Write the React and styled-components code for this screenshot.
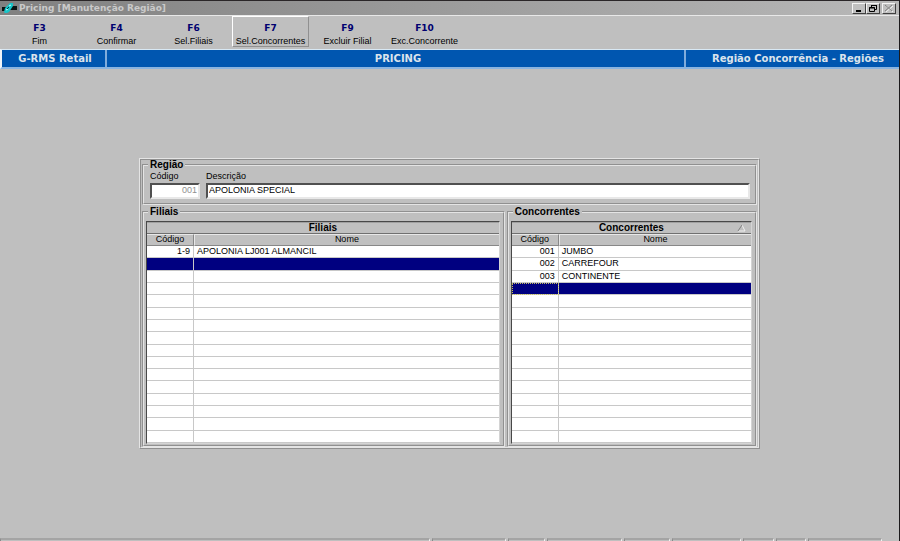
import styled, { createGlobalStyle } from "styled-components";

const GlobalStyle = createGlobalStyle`
    *, *::before, *::after {
        box-sizing: border-box;
    }

    body {
        margin: 0;
        background-color: #bfbfbf;
        color: #000;
        font-family: "Liberation Sans", Arial, sans-serif;
        font-size: 9px;
        line-height: 12px;
    }

    button, input {
        font: inherit;
        color: inherit;
    }
`;

const Window = styled.div`
    display: flex;
    flex-direction: column;
    min-height: 100vh;
    border-top: 1px solid #2a2628;
    border-right: 1px solid #1c1a1c;
`;

const TitleBar = styled.header`
    display: flex;
    align-items: center;
    gap: 2px;
    height: 14px;
    padding: 0 3px 0 2px;
    background: linear-gradient(to right, #808080, #b8b8b8);
`;

const Title = styled.h1`
    flex: 1;
    margin: 0;
    color: #cacaca;
    font-family: "DejaVu Sans", Verdana, sans-serif;
    font-size: 9px;
    font-weight: bold;
    line-height: 10px;
`;

const WindowButtons = styled.div`
    display: flex;
`;

const WindowButton = styled.button`
    display: flex;
    width: 14px;
    height: 11px;
    margin-left: ${({ $apart }) => ($apart ? "2px" : "0")};
    padding: 0;
    border: 1px solid;
    border-color: #f4f4f4 #404040 #404040 #f4f4f4;
    background-color: #c0c0c0;
`;

const Toolbar = styled.nav`
    display: flex;
    height: 34px;
    padding-left: 1px;
    border-top: 1px solid #e8e8e8;
`;

const ToolButton = styled.button`
    flex: 0 0 77px;
    height: 31px;
    padding: 5px 0 0;
    border: 1px solid;
    border-color: ${({ $active }) => ($active ? "#fff #909090 #909090 #fff" : "transparent")};
    background: none;
    color: #000;
    line-height: 13px;
    white-space: nowrap;

    strong {
        display: block;
        color: #000070;
        font-family: "DejaVu Sans", Verdana, sans-serif;
        font-size: 9px;
    }
`;

const Banner = styled.div`
    display: grid;
    grid-template-columns: 103px 1fr 213px;
    gap: 2px;
    border-top: 1px solid #d8e8f4;
    border-bottom: 2px solid #8ab4e0;
    border-left: 2px solid #f0f4f8;
    background-color: #80acdc;
    color: #dce4ec;
    font-family: "DejaVu Sans", Verdana, sans-serif;
    font-size: 10px;
    font-weight: bold;
    line-height: 17px;
    text-align: center;

    span {
        background-color: #0056b0;
    }

    span:first-child {
        padding-left: 3px;
    }

    span:nth-child(2) {
        padding-left: 5px;
    }

    span:last-child {
        padding-right: 15px;
        text-align: right;
    }
`;

const Panel = styled.main`
    display: grid;
    gap: 2px;
    margin: 89px 139px 0;
    padding: 0 1px;
    border: 2px ridge #e4e4e4;
`;

const Lists = styled.div`
    display: grid;
    grid-template-columns: 29fr 20fr;
    gap: 2px;
`;

const Group = styled.fieldset`
    min-width: 0;
    margin: 0;
    padding: ${({ $form }) => ($form ? "1px 5px 4px 6px" : "4px 3px 1px 2px")};
    border: 2px groove #e4e4e4;
`;

const Legend = styled.legend`
    margin-left: ${({ $form }) => ($form ? "-2px" : "2px")};
    padding: 0 2px;
    font-size: 10px;
    font-weight: bold;
    line-height: 10px;
`;

const Fields = styled.div`
    display: grid;
    grid-template-columns: 50px 1fr;
    gap: 6px;
`;

const Field = styled.label`
    display: grid;
    grid-template-rows: 12px 16px;
    line-height: 11px;
`;

const TextBox = styled.input`
    width: 100%;
    min-width: 0;
    padding: 0 1px 1px;
    border: 2px solid;
    border-color: #505050 #e8e8e8 #e8e8e8 #505050;
    border-radius: 0;
    background-color: #fff;
    outline: none;

    &:disabled {
        color: #909090;
        text-align: right;
    }
`;

const TableFrame = styled.div`
    border: 1px solid;
    border-color: #484848 #d4d4d4 #d4d4d4 #484848;
    background-color: #fff;
`;

const Table = styled.table`
    width: 100%;
    height: 221px;
    border-spacing: 0;
    table-layout: fixed;

    th, td {
        height: 12px;
        padding: 0 3px;
        border-bottom: 1px solid #c8c8c8;
        line-height: 11px;
        white-space: nowrap;
    }

    td:first-child {
        border-right: 1px solid #c8c8c8;
        text-align: right;
    }
`;

const CodeCol = styled.col`
    width: 47px;
`;

const Caption = styled.th`
    && {
        position: relative;
        border-top: 1px solid #a0a0a0;
        border-bottom-color: #707070;
        background-color: #c0c0c0;
        font-size: 10px;
        line-height: 9px;
        vertical-align: top;
    }

    svg {
        position: absolute;
        top: 1px;
        right: 5px;
    }
`;

const HeadCell = styled.th`
    && {
        border-top: 1px solid #e8e8e8;
        border-bottom-color: #888;
        background-color: #c0c0c0;
        font-weight: normal;
        line-height: 9px;
        vertical-align: top;
    }

    &:first-child {
        border-right: 1px solid #888;
    }

    &:last-child {
        border-left: 1px solid #e8e8e8;
    }
`;

const Row = styled.tr`
    background-color: ${({ $selected }) => ($selected ? "#000080" : "#fff")};
    color: ${({ $selected }) => ($selected ? "#fff" : "#000")};

    td:first-child {
        outline: ${({ $focused }) => ($focused ? "1px dotted #c8c060" : "none")};
        outline-offset: -1px;
    }
`;

const StatusBar = styled.footer`
    display: grid;
    grid-template-columns: 430fr 74fr 37fr 75fr 46fr 69fr 31fr 30fr 74fr;
    gap: 2px;
    height: 3px;
    margin-top: auto;
    padding-right: 17px;
`;

const StatusCell = styled.span`
    border: 1px solid;
    border-width: 2px 1px 0;
    border-color: #a4a4a4 #f4f4f4 #a4a4a4 #888;
`;

const actions = [
    { key: "F3", label: "Fim" },
    { key: "F4", label: "Confirmar" },
    { key: "F6", label: "Sel.Filiais" },
    { key: "F7", label: "Sel.Concorrentes", active: true },
    { key: "F9", label: "Excluir Filial" },
    { key: "F10", label: "Exc.Concorrente" },
];

const branches = [{ code: "1-9", name: "APOLONIA LJ001 ALMANCIL" }];

const competitors = [
    { code: "001", name: "JUMBO" },
    { code: "002", name: "CARREFOUR" },
    { code: "003", name: "CONTINENTE" },
];

const ROW_COUNT = 16;
const STATUS_COUNT = 9;

const AppIcon = () => (
    <svg width="15" height="12" viewBox="0 0 15 12" aria-hidden="true">
        <path d="M0 5h5v4H0zM8 4h7v4H8z" fill="#0c1414" />
        <path d="M2 10l1-4 3-3 2-2h3v3L9 7l-2 3-2 1H3z" fill="#18c4c8" />
        <path d="M7 4l2-1M4 8l2-1" stroke="#b8ffff" />
        <path d="M5 7l2-2" stroke="#083840" />
    </svg>
);

const SortIcon = () => (
    <svg width="9" height="8" viewBox="0 0 9 8" aria-hidden="true">
        <path d="M5 1l3 6H1" stroke="#f0f0f0" fill="none" />
        <path d="M5 1L1 7" stroke="#808080" fill="none" />
    </svg>
);

const DataTable = ({ title, rows, sorted, focused }) => (
    <TableFrame>
        <Table>
            <colgroup>
                <CodeCol />
                <col />
            </colgroup>
            <thead>
                <tr>
                    <Caption colSpan={2}>
                        {title}
                        {sorted && <SortIcon />}
                    </Caption>
                </tr>
                <tr>
                    <HeadCell>Código</HeadCell>
                    <HeadCell>Nome</HeadCell>
                </tr>
            </thead>
            <tbody>
                {Array.from({ length: ROW_COUNT }, (_, i) => (
                    <Row key={i} $selected={i === rows.length} $focused={focused && i === rows.length}>
                        <td>{rows[i]?.code}</td>
                        <td>{rows[i]?.name}</td>
                    </Row>
                ))}
            </tbody>
        </Table>
    </TableFrame>
);

export default function App() {
    return (
        <>
            <GlobalStyle />
            <Window>
                <TitleBar>
                    <AppIcon />
                    <Title>Pricing [Manutenção Região]</Title>
                    <WindowButtons>
                        <WindowButton aria-label="Minimizar">
                            <svg width="12" height="9" viewBox="0 0 12 9">
                                <path d="M3 6h5v2H3z" fill="#000" />
                            </svg>
                        </WindowButton>
                        <WindowButton aria-label="Restaurar">
                            <svg width="12" height="9" viewBox="0 0 12 9" fill="none" stroke="#000">
                                <path d="M4.5 3V1.5h5v4H8M4 1.5h6" />
                                <path d="M2.5 3.5h5v4h-5zM2 4h6" />
                            </svg>
                        </WindowButton>
                        <WindowButton aria-label="Fechar" $apart disabled>
                            <svg width="12" height="9" viewBox="0 0 12 9">
                                <path d="M3 2l7 6M10 2L3 8" stroke="#f4f4f4" />
                                <path d="M2 1l7 6M9 1L2 7" stroke="#808080" />
                            </svg>
                        </WindowButton>
                    </WindowButtons>
                </TitleBar>

                <Toolbar>
                    {actions.map(({ key, label, active }) => (
                        <ToolButton key={key} $active={active}>
                            <strong>{key}</strong>
                            {label}
                        </ToolButton>
                    ))}
                </Toolbar>

                <Banner>
                    <span>G-RMS Retail</span>
                    <span>PRICING</span>
                    <span>Região Concorrência - Regiões</span>
                </Banner>

                <Panel>
                    <Group $form>
                        <Legend $form>Região</Legend>
                        <Fields>
                            <Field>
                                Código
                                <TextBox defaultValue="001" disabled />
                            </Field>
                            <Field>
                                Descrição
                                <TextBox defaultValue="APOLONIA SPECIAL" />
                            </Field>
                        </Fields>
                    </Group>
                    <Lists>
                        <Group>
                            <Legend>Filiais</Legend>
                            <DataTable title="Filiais" rows={branches} />
                        </Group>
                        <Group>
                            <Legend>Concorrentes</Legend>
                            <DataTable title="Concorrentes" rows={competitors} sorted focused />
                        </Group>
                    </Lists>
                </Panel>

                <StatusBar>
                    {Array.from({ length: STATUS_COUNT }, (_, i) => (
                        <StatusCell key={i} />
                    ))}
                </StatusBar>
            </Window>
        </>
    );
}
